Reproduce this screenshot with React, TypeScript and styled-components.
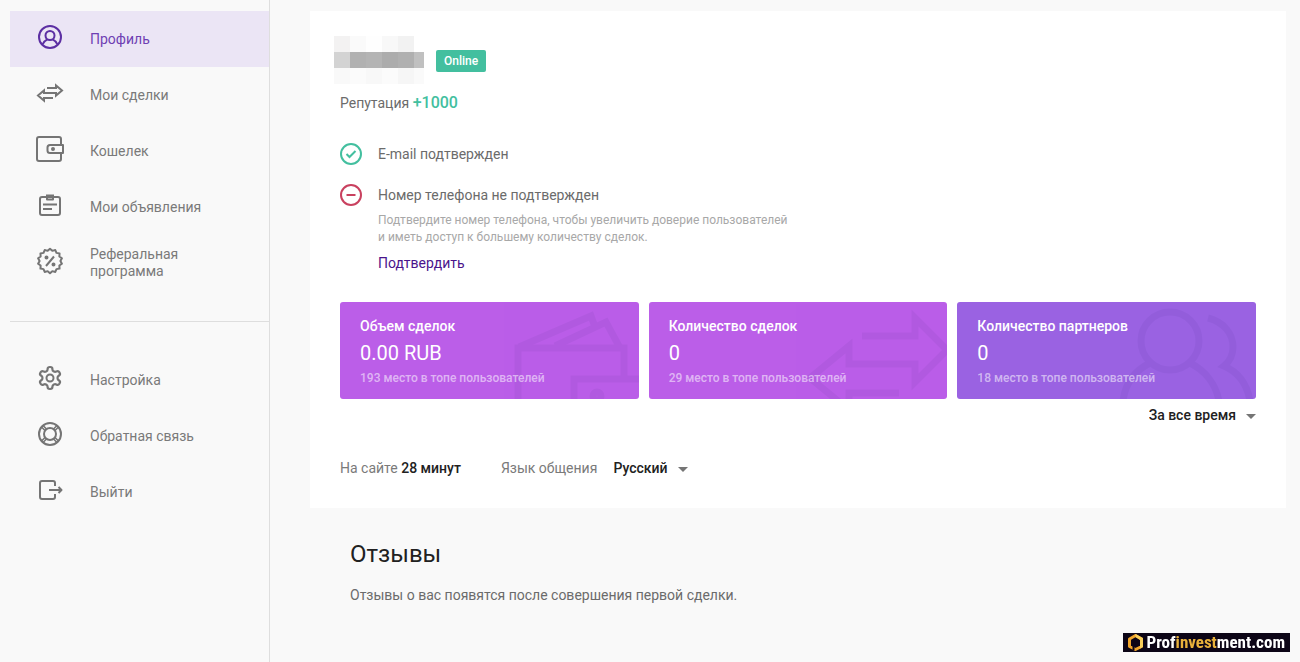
import React from "react";
import styled, { createGlobalStyle } from "styled-components";

const GlobalStyle = createGlobalStyle`
  *, *::before, *::after { box-sizing: border-box; }
  body {
    margin: 0;
    background: #f9f9f9;
    color: #6b6b6b;
    font-family: Roboto, "Liberation Sans", sans-serif;
    font-size: 14px;
    line-height: 20px;
  }
  p, h2, ul { margin: 0; padding: 0; }
`;

const Page = styled.div`
  display: flex;
  min-height: 100vh;
`;

const Sidebar = styled.aside`
  flex: 0 0 270px;
  padding: 11px 0 0 10px;
  border-right: 1px solid #dedede;
`;

const NavList = styled.ul`
  list-style: none;

  & + & {
    margin-top: 30px;
    padding-top: 30px;
    border-top: 1px solid #dedede;
  }
`;

const NavLink = styled.a<{ $active?: boolean }>`
  display: flex;
  align-items: center;
  gap: 24px;
  height: 56px;
  padding: 0 24px;
  background: ${(p) => (p.$active ? "#ebe5f5" : "transparent")};
  color: ${(p) => (p.$active ? "#6f3fb3" : "#7a7a7a")};
  line-height: 17px;
  text-decoration: none;
`;

const NavIcon = styled.svg<{ $active?: boolean }>`
  flex: none;
  width: 32px;
  height: 32px;
  margin-bottom: 4px;
  fill: none;
  stroke: ${(p) => (p.$active ? "#5c2fa3" : "#757575")};
  stroke-width: 2;
  stroke-linejoin: round;
`;

const Main = styled.main`
  flex: 1;
  min-width: 0;
  padding: 11px 14px 40px 40px;
`;

const ProfileCard = styled.section`
  padding: 25px 30px 30px;
  background: #fff;
`;

const NameRow = styled.div`
  display: flex;
  align-items: center;
  gap: 12px;
  margin-left: -6px;
`;

const OnlineBadge = styled.span`
  margin-top: 2px;
  padding: 0 8px;
  border-radius: 2px;
  background: #43bf9f;
  color: #fff;
  font-size: 12px;
  font-weight: 500;
  line-height: 22px;
`;

const Reputation = styled.p`
  margin-top: 9px;

  strong {
    color: #43bf9f;
    font-size: 16px;
    font-weight: 500;
  }
`;

const CheckList = styled.ul`
  display: grid;
  gap: 19px;
  margin-top: 30px;
  list-style: none;
`;

const CheckItem = styled.li`
  display: flex;
  gap: 16px;
`;

const StatusIcon = styled.svg<{ $ok?: boolean }>`
  flex: none;
  width: 22px;
  height: 22px;
  fill: none;
  stroke: ${(p) => (p.$ok ? "#43bf9f" : "#c9415f")};
  stroke-width: 2;
`;

const CheckTitle = styled.p`
  line-height: 22px;
`;

const CheckNote = styled.p`
  max-width: 412px;
  margin-top: 6px;
  color: #a8a8a8;
  font-size: 12px;
  line-height: 17px;
`;

const ConfirmLink = styled.a`
  display: block;
  width: fit-content;
  margin-top: 8px;
  color: #4a148c;
  line-height: 18px;
  text-decoration: none;
`;

const StatGrid = styled.div`
  display: grid;
  grid-template-columns: repeat(3, 1fr);
  gap: 10px;
  margin-top: 30px;
`;

const StatCard = styled.article<{ $color: string }>`
  position: relative;
  overflow: hidden;
  padding: 16px 20px 13px;
  border-radius: 3px;
  background: ${(p) => p.$color};
  color: #fff;
`;

const StatArt = styled.svg`
  position: absolute;
  right: 0;
  bottom: 0;
  width: 160px;
  height: 97px;
  fill: none;
  stroke: #3c2880;
  stroke-width: 7;
  opacity: 0.07;
`;

const StatTitle = styled.p`
  position: relative;
  font-weight: 500;
  line-height: 16px;
`;

const StatValue = styled.p`
  position: relative;
  margin-top: 7px;
  font-size: 20px;
  line-height: 24px;
`;

const StatRank = styled.p`
  position: relative;
  margin-top: 5px;
  color: rgba(255, 255, 255, 0.55);
  font-size: 12px;
  font-weight: 500;
  line-height: 16px;
`;

const PeriodRow = styled.div`
  display: flex;
  justify-content: flex-end;
  margin-top: 6px;
`;

const SelectBox = styled.span`
  display: inline-flex;
  align-items: center;
  gap: 10px;

  &::after {
    content: "";
    border: 5px solid transparent;
    border-top-color: #757575;
    border-bottom: 0;
    margin-top: 2px;
  }
`;

const Select = styled.select`
  appearance: none;
  field-sizing: content;
  height: 20px;
  padding: 0;
  border: 0;
  background: transparent;
  color: #212121;
  font: inherit;
  font-weight: 500;
  line-height: 20px;
`;

const InfoRow = styled.div`
  display: flex;
  gap: 40px;
  margin-top: 33px;
  color: #7a7a7a;

  strong {
    color: #212121;
    font-weight: 500;
  }
`;

const LanguageField = styled.div`
  display: flex;
  gap: 16px;
`;

const Reviews = styled.section`
  margin: 32px 40px 0;
`;

const ReviewsTitle = styled.h2`
  color: #212121;
  font-size: 24px;
  font-weight: 400;
  line-height: 28px;
`;

const ReviewsText = styled.p`
  margin-top: 17px;
`;

const SiteMark = styled.div`
  position: fixed;
  right: 10px;
  bottom: 10px;
  display: flex;
  align-items: center;
  gap: 3px;
  height: 19px;
  padding: 0 5px 0 4px;
  background: #0c0516;
  color: #fff;
  font-family: "Roboto Condensed", Roboto, sans-serif;
  font-size: 17px;
  font-variant-ligatures: none;
  font-weight: 700;
  line-height: 19px;

  em {
    color: #e9b13b;
    font-style: normal;
  }
`;

const badgePath = (() => {
  const teeth = 14;
  const pts: string[] = [];
  for (let i = 0; i < teeth; i++) {
    const at = (k: number, r: number) => {
      const a = ((i + k) / teeth) * Math.PI * 2 - Math.PI / 2;
      return `${(16 + r * Math.cos(a)).toFixed(2)} ${(16 + r * Math.sin(a)).toFixed(2)}`;
    };
    pts.push(at(0, 12.2), at(0.5, 10.4));
  }
  return `M${pts.join("L")}Z`;
})();

const icons = {
  profile: (
    <>
      <circle cx="16" cy="16" r="11" />
      <circle cx="16" cy="14.5" r="4.5" />
      <path d="M8.5 23.5c.8-2.2 2.5-4 4.800-5.200M23.5 23.5c-.8-2.200-2.500-4-4.800-5.200" />
    </>
  ),
  deals: <path strokeLinejoin="miter" d="M13 11H22V8.500L28 13.500L22 18.500V16H10V13.500L4 18.500L10 23.500V21H19" />,
  wallet: (
    <>
      <path d="M27 11V6a2 2 0 0 0-2-2H5a2 2 0 0 0-2 2v20a2 2 0 0 0 2 2h20a2 2 0 0 0 2-2v-5" />
      <path d="M29 12H16a2.500 2.500 0 0 0-2.500 2.500v3A2.500 2.500 0 0 0 16 20h13z" />
      <circle cx="19" cy="16" r="1" />
    </>
  ),
  ads: (
    <>
      <rect x="6" y="8" width="20" height="18" rx="2" />
      <path d="M13 7h6v3.500h-6zM9 15.500h14M9 20h9" />
      <path strokeWidth="3" d="M12 7h8" />
    </>
  ),
  referral: (
    <>
      <path d={badgePath} />
      <path d="M20 11.500L12 21" />
      <circle cx="12.500" cy="12.500" r="1" />
      <circle cx="19.500" cy="19.500" r="1" />
    </>
  ),
  settings: (
    <>
      <path
        transform="translate(2.8 2.8) scale(1.1)"
        d="M12.22 2h-.44a2 2 0 0 0-2 2v.18a2 2 0 0 1-1 1.73l-.43.25a2 2 0 0 1-2 0l-.15-.08a2 2 0 0 0-2.73.73l-.22.38a2 2 0 0 0 .73 2.73l.15.1a2 2 0 0 1 1 1.72v.51a2 2 0 0 1-1 1.74l-.15.09a2 2 0 0 0-.73 2.73l.22.38a2 2 0 0 0 2.73.73l.15-.08a2 2 0 0 1 2 0l.43.25a2 2 0 0 1 1 1.73V20a2 2 0 0 0 2 2h.44a2 2 0 0 0 2-2v-.18a2 2 0 0 1 1-1.73l.43-.25a2 2 0 0 1 2 0l.15.08a2 2 0 0 0 2.73-.73l.22-.39a2 2 0 0 0-.73-2.73l-.15-.08a2 2 0 0 1-1-1.74v-.5a2 2 0 0 1 1-1.74l.15-.09a2 2 0 0 0 .73-2.73l-.22-.38a2 2 0 0 0-2.73-.73l-.15.08a2 2 0 0 1-2 0l-.43-.25a2 2 0 0 1-1-1.73V4a2 2 0 0 0-2-2z"
      />
      <circle cx="16" cy="16" r="3.500" />
    </>
  ),
  support: (
    <>
      <circle cx="16" cy="16" r="11" />
      <circle cx="16" cy="16" r="6" />
      <path
        strokeWidth="1.500"
        d="M11 12.500L7.500 9M12.500 11L9 7.500M21 12.500L24.500 9M19.500 11L23 7.500M11 19.500L7.500 23M12.500 21L9 24.500M21 19.500L24.500 23M19.500 21L23 24.500"
      />
    </>
  ),
  exit: (
    <>
      <path d="M21 12V9a2 2 0 0 0-2-2H8a2 2 0 0 0-2 2v14a2 2 0 0 0 2 2h11a2 2 0 0 0 2-2v-3" />
      <path d="M15 16h12.500M24.500 13l3 3-3 3" />
    </>
  ),
};

type IconName = keyof typeof icons;

interface NavEntry {
  icon: IconName;
  label: string;
}

const accountNav: NavEntry[] = [
  { icon: "profile", label: "Профиль" },
  { icon: "deals", label: "Мои сделки" },
  { icon: "wallet", label: "Кошелек" },
  { icon: "ads", label: "Мои объявления" },
  { icon: "referral", label: "Реферальная программа" },
];

const serviceNav: NavEntry[] = [
  { icon: "settings", label: "Настройка" },
  { icon: "support", label: "Обратная связь" },
  { icon: "exit", label: "Выйти" },
];

const Nav = ({ entries, active }: { entries: NavEntry[]; active?: IconName }) => (
  <NavList>
    {entries.map((e) => (
      <li key={e.icon}>
        <NavLink href="#" $active={e.icon === active} aria-current={e.icon === active ? "page" : undefined}>
          <NavIcon $active={e.icon === active} viewBox="0 0 32 32" aria-hidden="true">
            {icons[e.icon]}
          </NavIcon>
          {e.label}
        </NavLink>
      </li>
    ))}
  </NavList>
);

const mosaic = [
  ["#f3f2f2", "#fafafa", "#fefefe", "#f8f8f8", "#f2f2f2", "#ffffff"],
  ["#d3d3d3", "#b1b1b1", "#b4b4b4", "#acacac", "#b0b0b0", "#c0c0c0"],
  ["#f9f9f9", "#fbfbfb", "#f8f8f8", "#fbfbfb", "#f6f6f6", "#fafafa"],
];

const HiddenName = () => (
  <svg width="90" height="48" viewBox="0 0 90 48" shapeRendering="crispEdges" aria-hidden="true">
    {mosaic.map((row, y) =>
      row.map((fill, x) => <rect key={`${x}-${y}`} x={x * 16} y={y * 16} width="16" height="16" fill={fill} />)
    )}
  </svg>
);

const stats = [
  {
    title: "Объем сделок",
    value: "0.00 RUB",
    rank: "193 место в топе пользователей",
    color: "#bb5ee8",
    art: (
      <>
        <path d="M39 97V46H145V76M160 77H95V97" />
        <path d="M40 45L112 14L116 25M76 44L127 20L141 46" />
        <circle cx="118" cy="94" r="4" />
      </>
    ),
  },
  {
    title: "Количество сделок",
    value: "0",
    rank: "29 место в топе пользователей",
    color: "#bb5ee8",
    art: <path d="M75 34H128V16L160 48L128 80V62H62V44L23 76L62 108V91H112" />,
  },
  {
    title: "Количество партнеров",
    value: "0",
    rank: "18 место в топе пользователей",
    color: "#9a62e2",
    art: (
      <>
        <circle cx="74" cy="39" r="29" />
        <path d="M27 99C29 83 38 69 54 61M94 61C110 69 120 83 123 99" />
        <path d="M112 16C128 20 137 32 137 45C137 54 133 60 128 64C142 70 151 82 154 99" />
      </>
    ),
  },
];

export default function App() {
  return (
    <>
      <GlobalStyle />
      <Page>
        <Sidebar>
          <nav>
            <Nav entries={accountNav} active="profile" />
            <Nav entries={serviceNav} />
          </nav>
        </Sidebar>
        <Main>
          <ProfileCard>
            <NameRow>
              <HiddenName />
              <OnlineBadge>Online</OnlineBadge>
            </NameRow>
            <Reputation>
              Репутация <strong>+1000</strong>
            </Reputation>
            <CheckList>
              <CheckItem>
                <StatusIcon $ok viewBox="0 0 22 22" aria-hidden="true">
                  <circle cx="11" cy="11" r="10" />
                  <path d="M6.500 11l3 3 6-6" />
                </StatusIcon>
                <CheckTitle>E-mail подтвержден</CheckTitle>
              </CheckItem>
              <CheckItem>
                <StatusIcon viewBox="0 0 22 22" aria-hidden="true">
                  <circle cx="11" cy="11" r="10" />
                  <path d="M6.500 11h9" />
                </StatusIcon>
                <div>
                  <CheckTitle>Номер телефона не подтвержден</CheckTitle>
                  <CheckNote>
                    Подтвердите номер телефона, чтобы увеличить доверие пользователей и иметь доступ к большему
                    количеству сделок.
                  </CheckNote>
                  <ConfirmLink href="#">Подтвердить</ConfirmLink>
                </div>
              </CheckItem>
            </CheckList>
            <StatGrid>
              {stats.map((s) => (
                <StatCard key={s.title} $color={s.color}>
                  <StatArt viewBox="0 0 160 97" aria-hidden="true">
                    {s.art}
                  </StatArt>
                  <StatTitle>{s.title}</StatTitle>
                  <StatValue>{s.value}</StatValue>
                  <StatRank>{s.rank}</StatRank>
                </StatCard>
              ))}
            </StatGrid>
            <PeriodRow>
              <SelectBox>
                <Select aria-label="Период" defaultValue="all">
                  <option value="all">За все время</option>
                </Select>
              </SelectBox>
            </PeriodRow>
            <InfoRow>
              <p>
                На сайте <strong>28 минут</strong>
              </p>
              <LanguageField>
                <label htmlFor="language">Язык общения</label>
                <SelectBox>
                  <Select id="language" defaultValue="ru">
                    <option value="ru">Русский</option>
                  </Select>
                </SelectBox>
              </LanguageField>
            </InfoRow>
          </ProfileCard>
          <Reviews>
            <ReviewsTitle>Отзывы</ReviewsTitle>
            <ReviewsText>Отзывы о вас появятся после совершения первой сделки.</ReviewsText>
          </Reviews>
        </Main>
      </Page>
      <SiteMark>
        <svg width="17" height="17" viewBox="0 0 17 17" aria-hidden="true">
          <path
            d="M8.500 1.500L14.500 5v7.500l-6 3-6-3V5z"
            fill="none"
            stroke="#f0a52b"
            strokeWidth="3"
            strokeLinejoin="round"
          />
          <path d="M8.500 0L16 4v9l-3 1.500V6L8.500 3z" fill="#f9cf5a" />
          <path d="M6.500 12v4" stroke="#0c0516" strokeWidth="2" />
        </svg>
        <span>
          Prof<em>invest</em>ment.com
        </span>
      </SiteMark>
    </>
  );
}
